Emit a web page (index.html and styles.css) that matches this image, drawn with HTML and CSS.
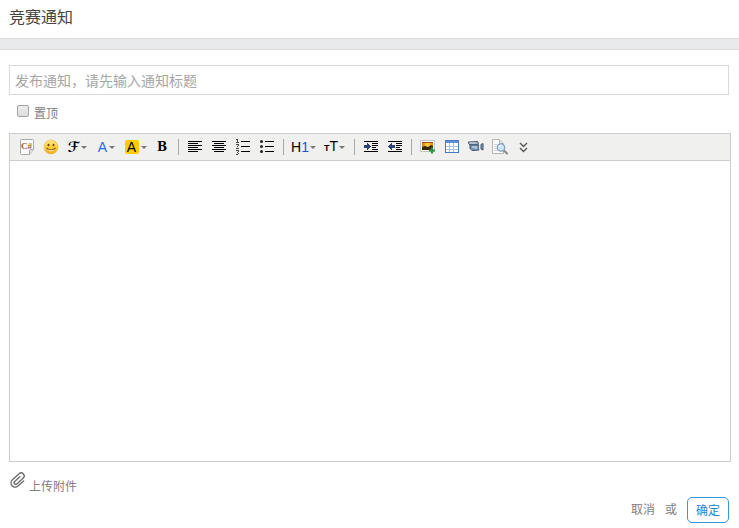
FILE: index.html
```html
<!DOCTYPE html>
<html lang="zh-CN">

<head>
    <meta charset="UTF-8">
    <meta name="viewport" content="width=device-width, initial-scale=1.0">
    <title>竞赛通知</title>
    <link rel="stylesheet" href="styles.css">
</head>

<body>
    <h1 class="page-title">竞赛通知</h1>
    <div class="divider"></div>

    <form class="notice-form">
        <input type="text" class="title-input" aria-label="通知标题" placeholder="发布通知，请先输入通知标题">

        <div class="sticky-row">
            <input type="checkbox" id="sticky">
            <label for="sticky">置顶</label>
        </div>

        <!-- 编辑器 -->
        <div class="editor">
            <div class="toolbar">
                <button type="button" class="tool" aria-label="插入代码">
                    <svg width="16" height="16" viewBox="0 0 16 16">
                        <path d="M2.5.5h11q1 0 1 1v9l-4 5h-8q-1 0-1-1v-13q0-1 1-1z" fill="#fdfdfb" stroke="#aaa9a5" />
                        <path d="M14.5 10.5h-3q-1 0-1 1v4" fill="#ddd" stroke="#aaa9a5" />
                        <text x="2" y="10" class="code-text">C#</text>
                    </svg>
                </button>
                <button type="button" class="tool" aria-label="插入表情">
                    <svg width="16" height="16" viewBox="0 0 16 16">
                        <defs>
                            <linearGradient id="face" x1="0" y1="0" x2="0" y2="1">
                                <stop offset="0" stop-color="#ffe98a" />
                                <stop offset=".5" stop-color="#ffd33a" />
                                <stop offset="1" stop-color="#f5a51c" />
                            </linearGradient>
                        </defs>
                        <circle cx="8" cy="8" r="7" fill="url(#face)" stroke="#eeb02c" stroke-width=".6" />
                        <ellipse cx="5.5" cy="6" rx="1" ry="1.300" fill="#74420d" />
                        <ellipse cx="10.5" cy="6" rx="1" ry="1.300" fill="#74420d" />
                        <path d="M3.500 9q4.500 4 9 0" fill="none" stroke="#8a4e10" stroke-width="1.100" />
                        <path d="M4.500 10.300q3.500 2 7 0-1 2-3.500 2t-3.500-2z" fill="#fff3c0" />
                    </svg>
                </button>
                <button type="button" class="tool tool-menu" aria-label="字体"><span class="font-letter">ℱ</span><span class="caret"></span></button>
                <button type="button" class="tool tool-menu" aria-label="文字颜色"><span class="color-letter">A</span><span class="caret"></span></button>
                <button type="button" class="tool tool-menu" aria-label="文字背景"><span class="mark-letter">A</span><span class="caret"></span></button>
                <button type="button" class="tool bold-letter" aria-label="粗体">B</button>
                <span class="separator"></span>
                <button type="button" class="tool" aria-label="左对齐">
                    <svg width="16" height="16" viewBox="0 0 16 16" shape-rendering="crispEdges">
                        <path d="M1 2.500h14M1 4.500h10M1 6.500h14M1 8.500h10M1 10.500h14M1 12.500h10" stroke="#000" />
                    </svg>
                </button>
                <button type="button" class="tool" aria-label="居中">
                    <svg width="16" height="16" viewBox="0 0 16 16" shape-rendering="crispEdges">
                        <path d="M1 2.500h14M3 4.500h10M1 6.500h14M3 8.500h10M1 10.500h14M3 12.500h10" stroke="#000" />
                    </svg>
                </button>
                <button type="button" class="tool" aria-label="编号">
                    <svg width="16" height="16" viewBox="0 0 16 16" shape-rendering="crispEdges">
                        <path d="M6 2.500h9M6 7.500h9M6 12.500h9" stroke="#000" />
                        <path d="M1 .5h2M2.500 0v3M1 3.500h3M1 5.500h2M3.500 5v2M2 7.500h1M1 9.500h3M1 11.500h2M3.500 11v2M2 13.500h1M3.500 14v1M1 15.500h2" stroke="#444" />
                    </svg>
                </button>
                <button type="button" class="tool" aria-label="项目符号">
                    <svg width="16" height="16" viewBox="0 0 16 16">
                        <path d="M6 2.500h9M6 7.500h9M6 12.500h9" stroke="#000" />
                        <g fill="#222">
                            <circle cx="2.500" cy="2.500" r="1.500" />
                            <circle cx="2.500" cy="7.500" r="1.500" />
                            <circle cx="2.500" cy="12.500" r="1.500" />
                        </g>
                    </svg>
                </button>
                <span class="separator"></span>
                <button type="button" class="tool tool-size" aria-label="标题"><span class="heading-letter">H<span class="level">1</span></span><span class="caret"></span></button>
                <button type="button" class="tool tool-size" aria-label="文字大小"><span class="size-letter"><small>T</small>T</span><span class="caret"></span></button>
                <span class="separator"></span>
                <button type="button" class="tool" aria-label="增加缩进">
                    <svg width="16" height="16" viewBox="0 0 16 16" shape-rendering="crispEdges">
                        <path d="M1 2.500h14M9 4.500h6M9 6.500h6M9 8.500h4M9 10.500h6M1 12.500h14" stroke="#000" />
                        <path d="M1 6h3V4l4 3.500L4 11V9H1z" fill="#2c4474" />
                    </svg>
                </button>
                <button type="button" class="tool" aria-label="减少缩进">
                    <svg width="16" height="16" viewBox="0 0 16 16" shape-rendering="crispEdges">
                        <path d="M1 2.500h14M9 4.500h6M9 6.500h6M9 8.500h4M9 10.500h6M1 12.500h14" stroke="#000" />
                        <path d="M8 6H5V4L1 7.500 5 11V9h3z" fill="#2c4474" />
                    </svg>
                </button>
                <span class="separator"></span>
                <button type="button" class="tool" aria-label="插入图片">
                    <svg width="16" height="16" viewBox="0 0 16 16">
                        <defs>
                            <linearGradient id="sunset" x1="0" y1="0" x2="1" y2="0">
                                <stop offset="0" stop-color="#d9780c" />
                                <stop offset=".5" stop-color="#ffd640" />
                                <stop offset="1" stop-color="#e8860f" />
                            </linearGradient>
                        </defs>
                        <path d="M.5 1.500h14v11H.5z" fill="#fff" stroke="#c4c4c4" />
                        <path d="M2 3h11v8H2z" fill="url(#sunset)" />
                        <path d="M2 3h11v1H2z" fill="#9b4a0a" />
                        <path d="M2 8l3-1 3 1 3-2 2 1v4H2z" fill="#3c210b" />
                        <path d="M12 8.500v6M9 11.500h6" stroke="#2c9641" stroke-width="2.200" />
                    </svg>
                </button>
                <button type="button" class="tool" aria-label="插入表格">
                    <svg width="16" height="16" viewBox="0 0 16 16" shape-rendering="crispEdges">
                        <path d="M1 1h14v13H1z" fill="#fff" />
                        <path d="M1 1h14v3H1z" fill="#608ed8" />
                        <path d="M2 7.500h12M2 10.500h12M5.500 4v10M9.500 4v10" stroke="#a9c2ea" />
                        <path d="M1.500 1.500h13v12h-13z" fill="none" stroke="#4a77c6" />
                    </svg>
                </button>
                <button type="button" class="tool" aria-label="插入视频">
                    <svg width="16" height="16" viewBox="0 0 16 16">
                        <path d="M.5 3l9-.5 1 2-1 1.500H2L.5 4.500z" fill="#8e9cad" stroke="#4b5c72" />
                        <path d="M2 6h9v5l-7 .5-2-2z" fill="#7898b8" stroke="#3c536e" />
                        <path d="M1.500 4h7" stroke="#dfe6ee" />
                        <path d="M11 5.500h1.500v5H11z" fill="#dfeaf4" />
                        <path d="M13 5.500l2-1v6.500l-2-1z" fill="#90a9c4" stroke="#3c536e" />
                        <path d="M4 8h3M8 7v3" stroke="#e4eef8" />
                    </svg>
                </button>
                <button type="button" class="tool" aria-label="预览">
                    <svg width="16" height="16" viewBox="0 0 16 16">
                        <path d="M.5.5h7l4 4v10H.5z" fill="#fafafa" stroke="#b5b5b5" />
                        <path d="M7.500.5v4h4" fill="#e4e4e4" stroke="#b5b5b5" />
                        <path d="M2 5.500h4M2 7.500h3M2 9.500h3M2 11.500h4" stroke="#d6d6d6" />
                        <path d="M12 11.500l3 3" stroke="#8f8784" stroke-width="2" stroke-linecap="round" />
                        <circle cx="9" cy="8.500" r="3.700" fill="#cfe3f8" stroke="#7d9cc4" stroke-width="1.200" />
                        <path d="M7 8q.5-2 2.500-2" stroke="#fff" fill="none" />
                    </svg>
                </button>
                <button type="button" class="tool" aria-label="更多">
                    <svg width="16" height="16" viewBox="0 0 16 16">
                        <path d="M4 4l3.500 3.500L11 4M4 9l3.500 3.500L11 9" fill="none" stroke="#555" stroke-width="1.400" />
                    </svg>
                </button>
            </div>
            <textarea class="editor-area" aria-label="通知内容"></textarea>
        </div>

        <a href="#" class="attach">
            <svg width="18" height="18" viewBox="0 0 18 18">
                <path d="M13.500 5.500V13a4.200 4.200 0 0 1-8.400 0V4a3 3 0 0 1 6 0v8.500a1.600 1.600 0 0 1-3.200 0V5.500" fill="none" stroke="#6c6c6c" stroke-width="1.400" stroke-linecap="round" transform="rotate(48 9 9)" />
            </svg>
            <span>上传附件</span>
        </a>

        <div class="actions">
            <a href="#" class="cancel">取消</a>
            <span>或</span>
            <button type="submit" class="submit">确定</button>
        </div>
    </form>
</body>

</html>
```
FILE: styles.css
```css
* {
    box-sizing: border-box;
    margin: 0;
    padding: 0;
}

body {
    font-family: "Noto Sans CJK SC", sans-serif;
    font-size: 12px;
    line-height: 18px;
    color: #808080;
    background-color: #fff;
}

button,
input,
textarea {
    font-family: inherit;
}

.page-title {
    padding: 4px 9px 10px;
    font-size: 16px;
    font-weight: 400;
    line-height: 24px;
    color: #444;
}

.divider {
    height: 12px;
    background-color: #e9eaec;
    border-top: 1px solid #dcdddd;
    border-bottom: 1px solid #dcdddd;
}

.notice-form {
    padding: 15px 8px 0 9px;
}

.title-input {
    display: block;
    width: calc(100% - 2px);
    height: 30px;
    padding: 0 5px;
    border: 1px solid #d9dadc;
    font-size: 14px;
    color: #444;
    outline: none;
}

.title-input::placeholder {
    color: #a6a6a6;
}

.sticky-row {
    display: flex;
    align-items: center;
    gap: 5px;
    height: 38px;
    padding: 0 8px 2px;
}

.sticky-row input {
    appearance: none;
    width: 12px;
    height: 12px;
    margin-bottom: 4px;
    border: 1px solid #a4a4a4;
    border-radius: 2px;
    background: linear-gradient(#eee, #dcdcdc);
}

.sticky-row input:checked {
    background: #3498db;
}

/* 编辑器 */
.editor {
    border: 1px solid #ccc;
}

.toolbar {
    display: flex;
    align-items: center;
    height: 27px;
    padding: 0 5px;
    background-color: #f0f0ee;
    border-bottom: 1px solid #ccc;
}

.tool {
    display: flex;
    align-items: center;
    justify-content: center;
    flex-shrink: 0;
    width: 24px;
    height: 24px;
    border: none;
    background: none;
    color: #000;
    line-height: 16px;
    cursor: pointer;
}

.tool svg {
    display: block;
}

.tool-menu {
    width: 29px;
    gap: 2px;
}

.tool-size {
    width: 31px;
    gap: 1px;
}

.caret {
    border: 3px solid transparent;
    border-top-color: #777;
    border-bottom: none;
}

.separator {
    flex-shrink: 0;
    width: 1px;
    height: 16px;
    margin: 0 4px;
    background-color: #a8a8a8;
}

.code-text {
    font-family: "Liberation Serif", serif;
    font-size: 9px;
    font-weight: bold;
    fill: #8a5c2c;
}

.font-letter {
    font-family: "DejaVu Sans", sans-serif;
    font-size: 14px;
    font-weight: bold;
}

.color-letter {
    font-family: "Liberation Sans", sans-serif;
    font-size: 14px;
    color: #2a6be0;
}

.mark-letter {
    width: 14px;
    height: 14px;
    border-radius: 2px;
    background-color: #fc0;
    font-family: "Liberation Sans", sans-serif;
    font-size: 14px;
    line-height: 14px;
}

.bold-letter {
    font-family: "DejaVu Serif", serif;
    font-size: 12px;
    font-weight: bold;
}

.heading-letter,
.size-letter {
    font-family: "Liberation Sans", sans-serif;
    font-size: 14px;
}

.level {
    color: #1a55d0;
}

.size-letter small {
    font-size: 9px;
    font-weight: bold;
}

.editor-area {
    display: block;
    width: 100%;
    height: 300px;
    padding: 5px;
    border: none;
    outline: none;
    resize: none;
    font-size: 12px;
}

.attach {
    display: inline-flex;
    align-items: flex-end;
    gap: 2px;
    margin-top: 9px;
    color: #808080;
    text-decoration: none;
}

.attach svg {
    margin-bottom: 6px;
}

.actions {
    display: flex;
    justify-content: flex-end;
    gap: 10px;
    margin-top: 2px;
    padding-right: 2px;
    line-height: 24px;
}

.cancel {
    color: #808080;
    text-decoration: none;
}

.submit {
    width: 42px;
    height: 26px;
    padding-bottom: 2px;
    border: 1px solid #3498db;
    border-radius: 5px;
    background-color: #fff;
    color: #2586d0;
    font-size: 12px;
    cursor: pointer;
}
```
